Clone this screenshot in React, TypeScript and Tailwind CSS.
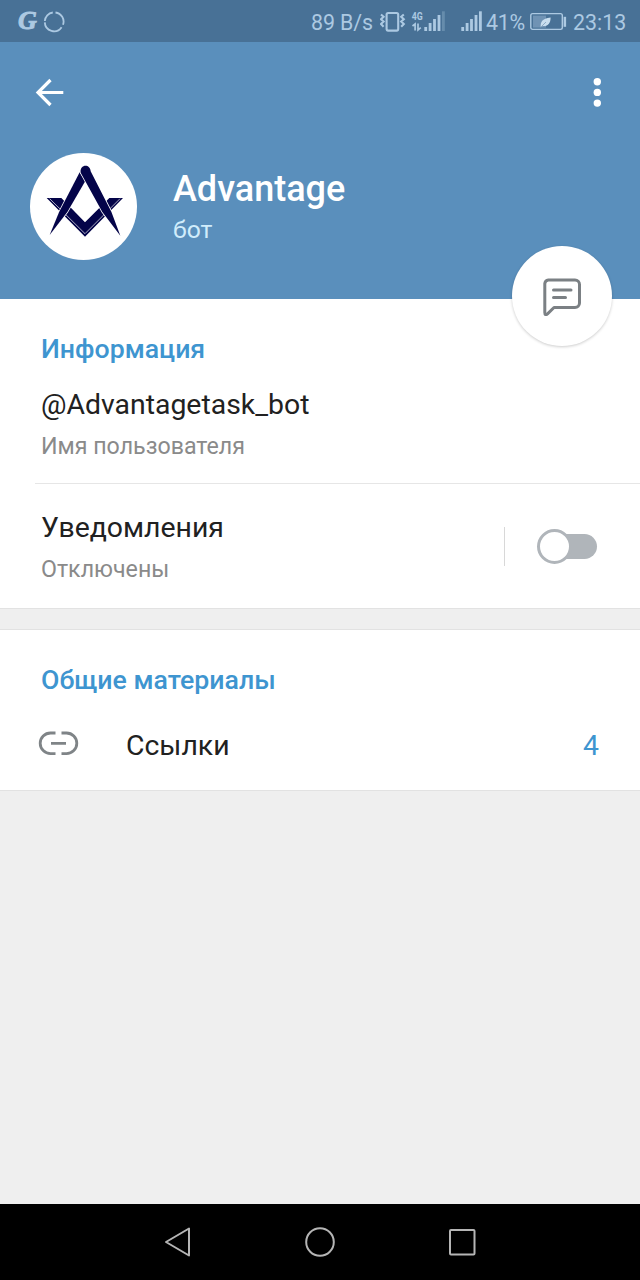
import type { ReactNode } from "react";

type SignalBarsProps = {
  className?: string;
  weak?: boolean;
};

const BARS = [
  { x: 0.3, y: 27 },
  { x: 4.7, y: 23 },
  { x: 9.1, y: 19 },
  { x: 13.6, y: 15 },
  { x: 18, y: 11.3 },
];

function SignalBars({ className, weak }: SignalBarsProps) {
  return (
    <svg className={className} width="21" height="42" viewBox="0 0 21 42" fill="currentColor">
      {BARS.map((bar, i) => (
        <rect key={bar.x} x={bar.x} y={bar.y} width="2.8" height={31 - bar.y} opacity={weak && i === 4 ? 0.3 : 1} />
      ))}
    </svg>
  );
}

function StatusBar() {
  return (
    <div className="flex h-[42px] items-center bg-[#487196] text-[21.4px] leading-[42px] text-[#acc9e2]">
      <span className="ml-[18px] w-[20px] font-['Liberation_Serif',serif] text-[26px] font-bold italic leading-[42px] [-webkit-text-stroke:0.9px_currentColor]">
        G
      </span>
      <svg className="ml-[5px]" width="22" height="42" viewBox="0 0 22 42" fill="none" stroke="currentColor" strokeWidth="1.8">
        <path d="M12.5 12.5A9.2 9.2 0 0 1 20 24.8M18.6 27.2A9.2 9.2 0 0 1 1.8 22.4M1.8 21A9.2 9.2 0 0 1 9.8 12.5" />
      </svg>
      <span className="ml-[246px] w-[64px] whitespace-nowrap pt-[3px] tracking-[-0.1px]">89 B/s</span>
      <svg className="ml-[5px]" width="27" height="42" viewBox="0 0 27 42" fill="none" stroke="currentColor" strokeWidth="2.1">
        <rect x="6.6" y="13" width="11.6" height="17.6" rx="1.5" />
        <path d="M1 14.5l2.6 2.3-2.6 2.4 2.6 2.4-2.6 2.4 2.6 2.8M23.8 14.5l-2.6 2.3 2.6 2.4-2.6 2.4 2.6 2.4-2.6 2.8" />
      </svg>
      <svg className="ml-[4px]" width="13" height="42" viewBox="0 0 13 42" fill="none" stroke="currentColor" strokeWidth="1.7">
        <text x="0.8" y="19.6" fontSize="10.5" fontWeight="700" fill="currentColor" stroke="none" textLength="11" lengthAdjust="spacingAndGlyphs">
          4G
        </text>
        <path d="M1.5 26l2.6-2v6.5M7 23.5V30l2.8-2.3" />
      </svg>
      <SignalBars weak />
      <SignalBars className="ml-[16px]" />
      <span className="ml-[4px] w-[40px] whitespace-nowrap pt-[3px] tracking-[-0.3px]">41%</span>
      <svg className="ml-[4px]" width="37" height="42" viewBox="0 0 37 42">
        <rect x="0.8" y="13.6" width="31.5" height="15.8" rx="1.8" fill="none" stroke="currentColor" strokeWidth="1.4" />
        <rect x="3" y="15.6" width="13" height="12" fill="currentColor" opacity="0.4" />
        <path d="M10.8 27.2c-.6-5 1.2-9 9.8-9.8 0 6-2.8 9.2-8 8.5z" fill="#c9deee" />
        <path d="M10.6 27.4L16 22" stroke="#7597b5" strokeWidth="0.7" />
        <rect x="33.6" y="16.8" width="2.5" height="10" fill="currentColor" />
      </svg>
      <span className="ml-[6px] whitespace-nowrap pt-[3px]">23:13</span>
    </div>
  );
}

function Avatar() {
  return (
    <svg className="shrink-0" width="107" height="107" viewBox="30 39 321 321">
      <circle cx="190.5" cy="199.5" r="160.5" fill="#fff" />
      <path d="M80 174H124L195 247L268 174H309L195 290Z" fill="#040449" />
      <path d="M89 176L195 281L300 176" fill="none" stroke="#fff" strokeWidth="2" />
      <g className="[paint-order:stroke]" fill="#040449" stroke="#fff" strokeWidth="4.5">
        <path d="M179 97L196 123L142 216L89 285L117 217Z" />
        <path d="M182 98C178 72 211 70 212 94L274 215L301 287L247 216Z" />
      </g>
    </svg>
  );
}

function Header() {
  return (
    <header className="relative h-[257px] bg-[#5a8fbc] text-white">
      <div className="flex h-[100px] items-center justify-between pl-[35px] pr-[39px]">
        <svg width="30" height="30" viewBox="0 0 30 30" fill="none" stroke="currentColor" strokeWidth="3.2">
          <path d="M28.3 15.5H3M15.5 3L3 15.5L15.5 28" />
        </svg>
        <svg width="8" height="30" viewBox="0 0 8 30" fill="currentColor">
          <circle cx="4.3" cy="4.7" r="3.7" />
          <circle cx="4.3" cy="15.4" r="3.7" />
          <circle cx="4.3" cy="26.1" r="3.7" />
        </svg>
      </div>
      <div className="flex pl-[30px] pt-[11px]">
        <Avatar />
        <div className="ml-[36px] pt-[15px]">
          <h1 className="text-[36px] font-medium leading-[42px]">Advantage</h1>
          <p className="mt-[5px] text-[24.7px] leading-[30px] text-[#d0ecfb]">бот</p>
        </div>
      </div>
      <button className="absolute right-[28px] top-[204px] flex size-[100px] items-center justify-center rounded-full bg-white text-[#7b8084] shadow-[0_1px_3px_rgba(0,0,0,0.2)]">
        <svg width="40" height="40" viewBox="0 0 40 40" fill="none" stroke="currentColor" strokeWidth="3" strokeLinecap="round" strokeLinejoin="round">
          <path d="M6.3 4H33A4.5 4.5 0 0 1 37.5 8.5V27A4.5 4.5 0 0 1 33 31.5H12L5.5 37.8Q2.8 40 2.8 36.5V7.5A4 4 0 0 1 6.3 4Z" />
          <path d="M11.5 14H29M11.5 21.5H23.5" />
        </svg>
      </button>
    </header>
  );
}

function SectionTitle({ children }: { children: ReactNode }) {
  return <h2 className="text-[26.7px] font-medium leading-[30px] text-[#3e95d0]">{children}</h2>;
}

function Row({ title, subtitle }: { title: string; subtitle: string }) {
  return (
    <div>
      <p className="text-[28.4px] leading-8 text-[#212121]">{title}</p>
      <p className="mt-[11px] text-[23.2px] leading-7 text-[#8a8a8a]">{subtitle}</p>
    </div>
  );
}

function Toggle() {
  return (
    <div className="flex items-center">
      <div className="z-10 size-[35px] shrink-0 rounded-full border-[3.5px] border-[#b0b5ba] bg-white" />
      <div className="-ml-[12px] h-[25px] w-[37px] rounded-r-full bg-[#b0b5ba]" />
    </div>
  );
}

function NavBar() {
  return (
    <nav className="flex h-[76px] items-center justify-between bg-black px-[163px]">
      <svg width="30" height="30" viewBox="0 0 30 30" fill="none" stroke="#b5b5b5" strokeWidth="2" strokeLinejoin="round">
        <path d="M3 15L26 1.5V28.5Z" />
      </svg>
      <svg width="30" height="30" viewBox="0 0 30 30" fill="none" stroke="#b5b5b5" strokeWidth="2">
        <circle cx="15" cy="15" r="13.8" />
      </svg>
      <svg width="30" height="30" viewBox="0 0 30 30" fill="none" stroke="#b5b5b5" strokeWidth="2">
        <rect x="3" y="3" width="24.5" height="24.5" rx="1" />
      </svg>
    </nav>
  );
}

export default function App() {
  return (
    <div className="flex h-[1280px] w-[640px] flex-col overflow-hidden bg-[#efefef] font-[Roboto,sans-serif]">
      <StatusBar />
      <Header />
      <section className="h-[310px] border-b border-[#e2e2e2] bg-white pt-[35px]">
        <div className="px-[41px]">
          <SectionTitle>Информация</SectionTitle>
          <div className="mt-[25px]">
            <Row title="@Advantagetask_bot" subtitle="Имя пользователя" />
          </div>
        </div>
        <div className="ml-[35px] mt-[23px] h-px bg-[#e6e6e6]" />
        <div className="flex justify-between pl-[41px] pr-[43px] pt-[28px]">
          <Row title="Уведомления" subtitle="Отключены" />
          <div className="mt-[14px] flex h-10 items-center">
            <div className="mr-[32px] h-[39px] w-px bg-[#d8d8d8]" />
            <Toggle />
          </div>
        </div>
      </section>
      <section className="mt-[20px] h-[162px] border-y border-[#e2e2e2] bg-white px-[41px] pt-[35px]">
        <SectionTitle>Общие материалы</SectionTitle>
        <div className="mt-[34px] flex text-[28.4px] leading-[34px]">
          <svg className="-ml-[3px] mt-[1px]" width="42" height="26" viewBox="0 0 42 26" fill="none" stroke="#7f8487" strokeWidth="2.8">
            <path d="M17.5 3H12.5A10.3 10.3 0 0 0 12.5 23.6H17.5M23.5 3H28.5A10.3 10.3 0 0 1 28.5 23.6H23.5M13 13.3H28" />
          </svg>
          <span className="ml-[46px] text-[#212121]">Ссылки</span>
          <span className="ml-auto text-[#3e95d0]">4</span>
        </div>
      </section>
      <div className="grow" />
      <NavBar />
    </div>
  );
}
